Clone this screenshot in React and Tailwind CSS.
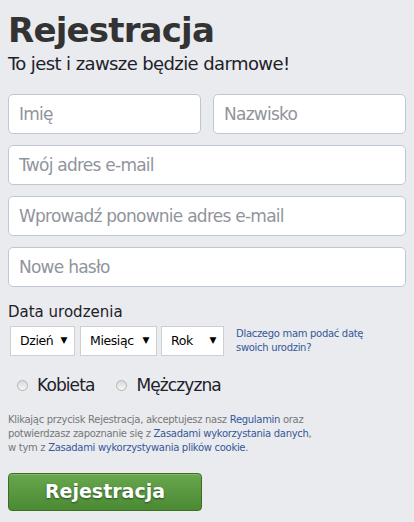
const font = { fontFamily: '"DejaVu Sans", Verdana, sans-serif' };

const Field = ({ placeholder, className = "" }) => (
  <input
    type="text"
    placeholder={placeholder}
    className={`h-10 min-w-0 rounded-[5px] border border-[#bdc7d8] bg-white px-[10px] text-[17px] tracking-[-0.75px] text-[#1d2129] placeholder:text-[#90949c] outline-none ${className}`}
  />
);

const Select = ({ label, width }) => (
  <div
    className={`flex h-[30px] items-center justify-between border border-[#ccd0d5] bg-white pl-[9px] pr-[7px] text-[12.5px] tracking-[-0.4px] text-black ${width}`}
  >
    <span>{label}</span>
    <span className="text-[9px]">▼</span>
  </div>
);

const Radio = ({ label }) => (
  <label className="flex items-center gap-[9px]">
    <span className="h-[11px] w-[11px] rounded-full border border-[#b4b4b4] bg-gradient-to-b from-[#d9d9d9] to-[#f7f7f7]" />
    <span className="text-[17px] tracking-[-0.9px] text-[#1d2129]">{label}</span>
  </label>
);

export default function App() {
  return (
    <div
      className="min-h-[522px] w-[414px] bg-[#e9ebef] px-2 pt-[8px] text-[#1d2129]"
      style={font}
    >
      {/* Header */}
      <h1 className="text-[34px] font-bold leading-[44px] tracking-[-0.8px] text-[#333]">
        Rejestracja
      </h1>
      <p className="text-[18px] leading-[24px] tracking-[-0.6px] text-[#1d2129]">
        To jest i zawsze będzie darmowe!
      </p>

      {/* Inputs */}
      <div className="mt-[18px] flex flex-col gap-[11px]">
        <div className="grid grid-cols-2 gap-3">
          <Field placeholder="Imię" />
          <Field placeholder="Nazwisko" />
        </div>
        <Field placeholder="Twój adres e-mail" />
        <Field placeholder="Wprowadź ponownie adres e-mail" />
        <Field placeholder="Nowe hasło" />
      </div>

      {/* Birthday */}
      <div className="mt-[15px] text-[15px] leading-5 text-[#1d2129]">Data urodzenia</div>
      <div className="mt-[4px] flex items-center pl-[2px]">
        <Select label="Dzień" width="w-[65px]" />
        <div className="w-[5px]" />
        <Select label="Miesiąc" width="w-[77px]" />
        <div className="w-[4px]" />
        <Select label="Rok" width="w-[63px]" />
        <a className="ml-3 text-[10px] leading-[14px] tracking-[-0.3px] text-[#365899]">
          Dlaczego mam podać datę
          <br />
          swoich urodzin?
        </a>
      </div>

      {/* Gender */}
      <div className="mt-[17px] flex items-center gap-[22px] pl-[9px]">
        <Radio label="Kobieta" />
        <Radio label="Mężczyzna" />
      </div>

      {/* Terms */}
      <p className="mt-[14px] text-[10px] leading-[14px] tracking-[-0.3px] text-[#777]">
        Klikając przycisk Rejestracja, akceptujesz nasz{" "}
        <a className="text-[#365899]">Regulamin</a> oraz
        <br />
        potwierdzasz zapoznanie się z{" "}
        <a className="text-[#365899]">Zasadami wykorzystania danych</a>,
        <br />w tym z{" "}
        <a className="text-[#365899]">Zasadami wykorzystywania plików cookie</a>.
      </p>

      {/* Submit */}
      <button className="mt-[18px] flex h-[38px] w-[194px] items-center justify-center rounded-[4px] border border-[#3b6e22] bg-gradient-to-b from-[#69a74e] to-[#4a8a33] text-[19px] font-bold text-white [text-shadow:0_1px_2px_rgba(0,0,0,0.5)] shadow-[inset_0_1px_0_rgba(255,255,255,0.2)]">
        Rejestracja
      </button>
    </div>
  );
}
